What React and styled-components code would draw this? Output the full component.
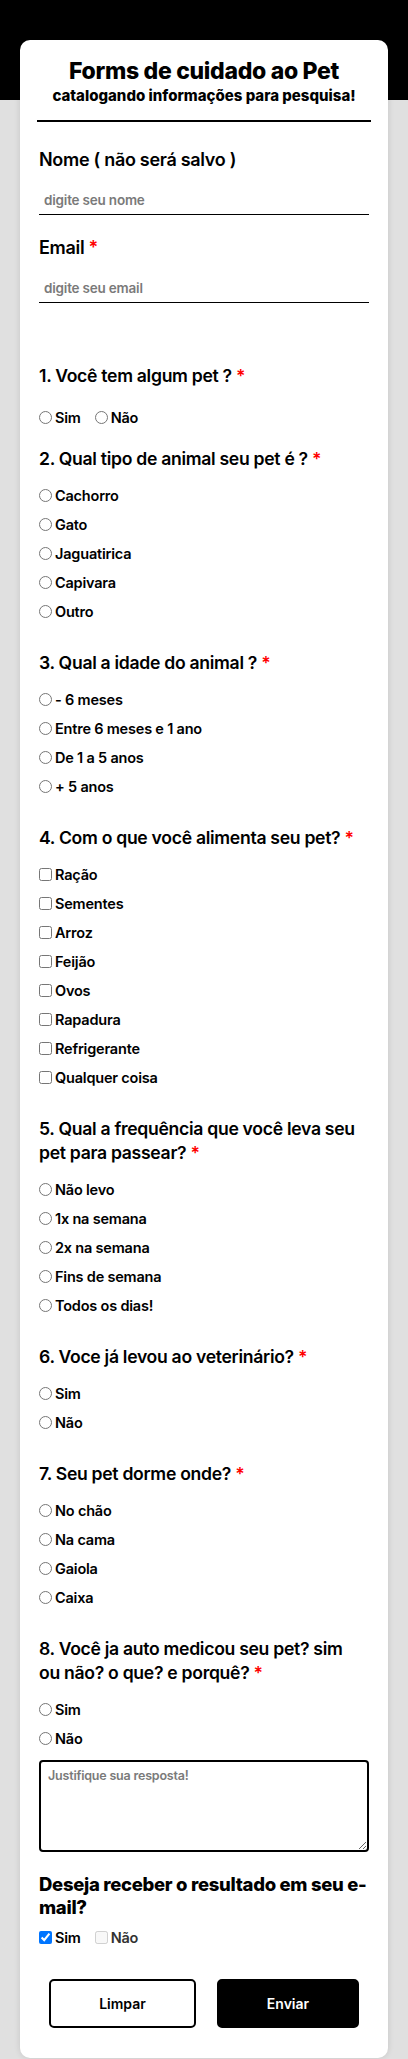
import React from "react";
import styled, { createGlobalStyle } from "styled-components";

const Global = createGlobalStyle`
  html, body { margin: 0; padding: 0; }
  body {
    background: linear-gradient(#000 0, #000 100px, #e0e0e0 100px, #e0e0e0 100%);
    font-family: "Inter", "Noto Sans", sans-serif;
    color: #000;
  }
  * { box-sizing: border-box; }
`;

const Page = styled.div`
  padding: 40px 20px 1px;
`;

const Card = styled.form`
  background: #fff;
  border-radius: 10px;
  box-shadow: 0 0 6px rgba(0, 0, 0, 0.12);
  padding: 17px 19px 30px;
  display: flex;
  flex-direction: column;
`;

const Header = styled.header`
  text-align: center;
`;

const Title = styled.h1`
  margin: 0;
  font-size: 23px;
  line-height: 28px;
  font-weight: 800;
  letter-spacing: -0.3px;
`;

const Subtitle = styled.p`
  margin: 2px 0 0;
  font-size: 15px;
  line-height: 18px;
  font-weight: 800;
  letter-spacing: 0;
`;

const Rule = styled.hr`
  margin: 15px -2px 0;
  border: 0;
  height: 2px;
  background: #000;
`;

const FieldLabel = styled.label`
  display: block;
  margin-top: ${(p) => p.$mt}px;
  font-size: 18px;
  line-height: 24px;
  font-weight: 600;
  letter-spacing: -0.3px;
`;

const Star = styled.span`
  color: #f00;
`;

const TextInput = styled.input`
  display: block;
  width: 100%;
  height: 30px;
  margin-top: 13px;
  padding: 0 5px;
  border: 0;
  border-bottom: 1px solid #000;
  font-family: inherit;
  font-size: 13.5px;
  font-weight: 600;
  letter-spacing: -0.2px;
  outline: none;
  &::placeholder { color: #7a7a7a; }
`;

const Question = styled.fieldset`
  border: 0;
  margin: ${(p) => p.$mt}px 0 0;
  padding: 0;
  min-width: 0;
`;

const Legend = styled.legend`
  padding: 0;
  font-size: 17.6px;
  line-height: 24px;
  font-weight: 600;
  letter-spacing: -0.3px;
  margin-bottom: ${(p) => p.$mb ?? 10}px;
`;

const StrongLegend = styled(Legend)`
  font-size: 18.5px;
  font-weight: 800;
  line-height: 23px;
`;

const Options = styled.div`
  display: flex;
  flex-direction: ${(p) => (p.$row ? "row" : "column")};
  gap: ${(p) => (p.$row ? "14px" : "0")};
`;

const Option = styled.label`
  display: flex;
  align-items: center;
  height: 29px;
  font-size: 14.5px;
  font-weight: 600;
  letter-spacing: -0.2px;
  color: ${(p) => (p.$muted ? "#333" : "#000")};
`;

const Control = styled.input`
  width: 13px;
  height: 13px;
  margin: 0 3px 0 0;
  ${(p) => (p.$accent ? "accent-color: #0075ff;" : "")}
`;

const Area = styled.textarea`
  display: block;
  width: 100%;
  height: 92px;
  margin-top: 7px;
  padding: 6px 7px;
  border: 2px solid #000;
  border-radius: 4px;
  font-family: inherit;
  font-size: 12.5px;
  font-weight: 600;
  letter-spacing: -0.2px;
  resize: vertical;
  outline: none;
  &::placeholder { color: #7a7a7a; }
`;

const Buttons = styled.div`
  display: flex;
  justify-content: space-between;
  padding: 0 10px;
  margin-top: 27px;
`;

const Button = styled.button`
  width: ${(p) => p.$w}px;
  height: 49px;
  border-radius: 5px;
  border: 2px solid #000;
  background: ${(p) => (p.$dark ? "#000" : "#fff")};
  color: ${(p) => (p.$dark ? "#fff" : "#000")};
  font-family: inherit;
  font-size: 14px;
  font-weight: 600;
  cursor: pointer;
`;

const questions = [
  { n: "2", q: "Qual tipo de animal seu pet é ?", name: "tipo", type: "radio", opts: ["Cachorro", "Gato", "Jaguatirica", "Capivara", "Outro"], mt: 15 },
  { n: "3", q: "Qual a idade do animal ?", name: "idade", type: "radio", opts: ["- 6 meses", "Entre 6 meses e 1 ano", "De 1 a 5 anos", "+ 5 anos"], mt: 25 },
  { n: "4", q: "Com o que você alimenta seu pet?", name: "alimento", type: "checkbox", opts: ["Ração", "Sementes", "Arroz", "Feijão", "Ovos", "Rapadura", "Refrigerante", "Qualquer coisa"], mt: 25 },
  { n: "5", q: "Qual a frequência que você leva seu pet para passear?", name: "freq", type: "radio", opts: ["Não levo", "1x na semana", "2x na semana", "Fins de semana", "Todos os dias!"], mt: 25 },
  { n: "6", q: "Voce já levou ao veterinário?", name: "vet", type: "radio", opts: ["Sim", "Não"], mt: 25 },
  { n: "7", q: "Seu pet dorme onde?", name: "dorme", type: "radio", opts: ["No chão", "Na cama", "Gaiola", "Caixa"], mt: 25 },
];

export default function App() {
  return (
    <>
      <Global />
      <Page>
        <Card onSubmit={(e) => e.preventDefault()}>
          <Header>
            <Title>Forms de cuidado ao Pet</Title>
            <Subtitle>catalogando informações para pesquisa!</Subtitle>
          </Header>
          <Rule />

          <FieldLabel $mt={26} htmlFor="nome">Nome ( não será salvo )</FieldLabel>
          <TextInput id="nome" placeholder="digite seu nome" />

          <FieldLabel $mt={21} htmlFor="email">Email <Star>*</Star></FieldLabel>
          <TextInput id="email" placeholder="digite seu email" />

          <Question $mt={61}>
            <Legend $mb={15}>1. Você tem algum pet ? <Star>*</Star></Legend>
            <Options $row>
              <Option><Control type="radio" name="pet" />Sim</Option>
              <Option><Control type="radio" name="pet" />Não</Option>
            </Options>
          </Question>

          {questions.map((item) => (
            <Question key={item.n} $mt={item.mt}>
              <Legend>{item.n}. {item.q} <Star>*</Star></Legend>
              <Options>
                {item.opts.map((o) => (
                  <Option key={o}><Control type={item.type} name={item.name} />{o}</Option>
                ))}
              </Options>
            </Question>
          ))}

          <Question $mt={25}>
            <Legend>8. Você ja auto medicou seu pet? sim ou{"\u00A0"}não? o que? e porquê? <Star>*</Star></Legend>
            <Options>
              <Option><Control type="radio" name="med" />Sim</Option>
              <Option><Control type="radio" name="med" />Não</Option>
            </Options>
            <Area placeholder="Justifique sua resposta!" />
          </Question>

          <Question $mt={21}>
            <StrongLegend $mb={4}>Deseja receber o resultado em seu e-mail?</StrongLegend>
            <Options $row>
              <Option><Control type="checkbox" $accent defaultChecked />Sim</Option>
              <Option $muted><Control type="checkbox" disabled />Não</Option>
            </Options>
          </Question>

          <Buttons>
            <Button type="reset" $w={147}>Limpar</Button>
            <Button type="submit" $w={142} $dark>Enviar</Button>
          </Buttons>
        </Card>
      </Page>
    </>
  );
}
